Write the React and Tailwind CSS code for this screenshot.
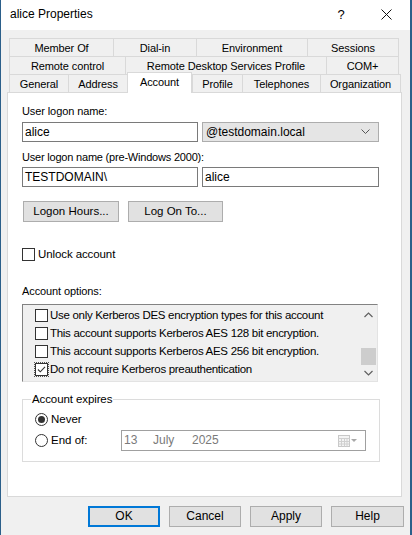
import React from "react";

const row1 = [
  ["Member Of", 104],
  ["Dial-in", 83],
  ["Environment", 111],
  ["Sessions", 92],
];
const row2 = [
  ["Remote control", 116],
  ["Remote Desktop Services Profile", 201],
  ["COM+", 73],
];
const row3 = [
  ["General", 59],
  ["Address", 59],
  ["Account", 65],
  ["Profile", 50],
  ["Telephones", 78],
  ["Organization", 81],
];

const options = [
  ["Use only Kerberos DES encryption types for this account", false],
  ["This account supports Kerberos AES 128 bit encryption.", false],
  ["This account supports Kerberos AES 256 bit encryption.", false],
  ["Do not require Kerberos preauthentication", true],
];

const TabRow = ({ tabs }) => (
  <div className="flex ml-[8px] tracking-[-0.1px]">
    {tabs.map(([label, w], i) => {
      if (label === "Account") {
        return (
          <div
            key={label}
            style={{ width: w }}
            className="relative z-10 -mt-[2px] -mb-px h-[21px] flex items-start justify-center pt-[3px] bg-white border-t border-l border-r border-[#d9d9d9]"
          >
            {label}
          </div>
        );
      }
      return (
        <div
          key={label}
          style={{ width: w }}
          className={
            "h-[18px] flex items-center justify-center pt-[2px] bg-[#f0f0f0] border-t border-l border-[#d9d9d9] " +
            (i === tabs.length - 1 ? "border-r" : "")
          }
        >
          {label}
        </div>
      );
    })}
  </div>
);

const CheckBox = ({ checked }) => (
  <div className="w-[13px] h-[13px] border border-[#333333] bg-white flex items-center justify-center shrink-0">
    {checked && (
      <svg width="11" height="11" viewBox="0 0 11 11">
        <path d="M2 5.5 L4.3 7.8 L9 2.8" fill="none" stroke="#333333" strokeWidth="1.1" />
      </svg>
    )}
  </div>
);

const Radio = ({ checked }) => (
  <div className="w-[13px] h-[13px] rounded-full border border-[#333333] bg-white flex items-center justify-center shrink-0">
    {checked && <div className="w-[7px] h-[7px] rounded-full bg-[#333333]" />}
  </div>
);

const Btn = ({ children, w, primary }) => (
  <div
    style={{ width: w }}
    className={
      "h-[21px] flex items-center justify-center bg-[#e1e1e1] " +
      (primary ? "border-2 border-[#0078d7]" : "border border-[#adadad]")
    }
  >
    {children}
  </div>
);

export default function App() {
  return (
    <div className="w-[412px] h-[535px] overflow-hidden bg-[#f0f0f0] border-l border-r-2 border-[#2b5f8a] font-['Liberation_Sans',Arial,sans-serif] text-[11px] text-black leading-[13px]">
      {/* Title bar */}
      <div className="h-[30px] bg-white flex items-center">
        <div className="ml-[9px] text-[12px] leading-[14px] flex-1 -mt-[2px]">alice Properties</div>
        <div className="text-[13px] w-[20px] text-center mr-[30px] -mt-[2px]">?</div>
        <svg width="11" height="11" viewBox="0 0 11 11" className="mr-[18px] -mt-[2px]">
          <path d="M0.5 0.5 L10.5 10.5 M10.5 0.5 L0.5 10.5" stroke="#111" strokeWidth="1" />
        </svg>
      </div>

      {/* Tabs */}
      <div className="pt-[8px]">
        <TabRow tabs={row1} />
        <TabRow tabs={row2} />
        <TabRow tabs={row3} />
      </div>

      {/* Panel */}
      <div className="ml-[6px] w-[395px] h-[405px] bg-white border border-[#d9d9d9] pl-[14px] pt-[12px] flex flex-col">
        <div className="tracking-[-0.1px]">User logon name:</div>
        <div className="flex gap-[4px] mt-[4px]">
          <div className="w-[176px] h-[20px] border border-[#7a7a7a] bg-white flex items-center pl-[2px] text-[12px]">
            alice
          </div>
          <div className="w-[177px] h-[20px] border border-[#adadad] bg-[#e5e5e5] flex items-center pl-[3px] pr-[8px] text-[12px]">
            <span className="flex-1">@testdomain.local</span>
            <svg width="9" height="6" viewBox="0 0 9 6">
              <path d="M0.5 0.5 L4.5 4.5 L8.5 0.5" fill="none" stroke="#555" strokeWidth="1" />
            </svg>
          </div>
        </div>

        <div className="mt-[9px] tracking-[-0.2px]">User logon name (pre-Windows 2000):</div>
        <div className="flex gap-[4px] mt-[3px]">
          <div className="w-[176px] h-[20px] border border-[#7a7a7a] bg-white flex items-center pl-[2px] text-[12px]">
            TESTDOMAIN\
          </div>
          <div className="w-[177px] h-[20px] border border-[#7a7a7a] bg-white flex items-center pl-[2px] text-[12px]">
            alice
          </div>
        </div>

        <div className="flex gap-[9px] mt-[14px] ml-[1px] text-[11.5px]">
          <Btn w={96}>Logon Hours...</Btn>
          <Btn w={95}>Log On To...</Btn>
        </div>

        <div className="flex items-center gap-[3px] mt-[26px]">
          <CheckBox />
          <span className="text-[11.5px] tracking-[-0.1px]">Unlock account</span>
        </div>

        <div className="mt-[24px] tracking-[-0.1px]">Account options:</div>

        {/* Options list */}
        <div className="mt-[6px] w-[356px] h-[78px] bg-[#f0f0f0] border-t border-l border-[#828282] border-r border-b border-r-[#e3e3e3] border-b-[#e3e3e3] flex">
          <div className="flex-1 flex flex-col pt-px pl-[11px]">
            {options.map(([label, checked]) => (
              <div key={label} className="h-[18px] flex items-center gap-px text-[11.5px] tracking-[-0.3px]">
                <div className={checked ? "border border-dotted border-[#555]" : "border border-transparent"}>
                  <CheckBox checked={checked} />
                </div>
                <span>{label}</span>
              </div>
            ))}
          </div>
          <div className="w-[15px] mr-px flex flex-col items-center">
            <div className="h-[19px] flex items-center justify-center">
              <svg width="9" height="6" viewBox="0 0 9 6">
                <path d="M0.5 5 L4.5 1 L8.5 5" fill="none" stroke="#606060" strokeWidth="1.2" />
              </svg>
            </div>
            <div className="mt-[24px] w-[15px] h-[17px] bg-[#cdcdcd]" />
            <div className="flex-1 flex items-center justify-center">
              <svg width="9" height="6" viewBox="0 0 9 6">
                <path d="M0.5 1 L4.5 5 L8.5 1" fill="none" stroke="#606060" strokeWidth="1.2" />
              </svg>
            </div>
          </div>
        </div>

        {/* Account expires */}
        <fieldset className="mt-[10px] w-[358px] border border-[#dcdcdc] pb-[10px]">
          <legend className="ml-[8px] px-px text-[11.5px] leading-[14px] tracking-[-0.1px]">Account expires</legend>
          <div className="flex items-center gap-[3px] mt-[7px] ml-[12px] text-[11.5px]">
            <Radio checked />
            <span>Never</span>
          </div>
          <div className="flex items-center mt-[4px] ml-[12px] text-[11.5px]">
            <Radio />
            <span className="ml-[3px] w-[70px]">End of:</span>
            <div className="w-[245px] h-[21px] border border-[#a0a0a0] bg-white flex items-center pl-[2px] pr-[7px] text-[12px] text-[#7a7a7a]">
              <span className="w-[29px]">13</span>
              <span className="w-[39px]">July</span>
              <span className="flex-1">2025</span>
              <svg width="20" height="12" viewBox="0 0 20 12">
                <rect x="0.5" y="0.5" width="11" height="11" fill="#f4f4f4" stroke="#c8c8c8" />
                <path d="M0.5 3.5 H11.5 M0.5 6.5 H11.5 M0.5 9 H11.5 M3.5 3.5 V11.5 M6.5 3.5 V11.5 M9 3.5 V11.5" stroke="#d0d0d0" strokeWidth="1" />
                <path d="M13 4 L19 4 L16 7 Z" fill="#a8a8a8" />
              </svg>
            </div>
          </div>
        </fieldset>
      </div>

      {/* Bottom buttons */}
      <div className="flex gap-[9px] mt-[9px] ml-[87px] text-[12px]">
        <Btn w={72} primary>OK</Btn>
        <Btn w={72}>Cancel</Btn>
        <Btn w={72}>Apply</Btn>
        <Btn w={73}>Help</Btn>
      </div>
    </div>
  );
}
